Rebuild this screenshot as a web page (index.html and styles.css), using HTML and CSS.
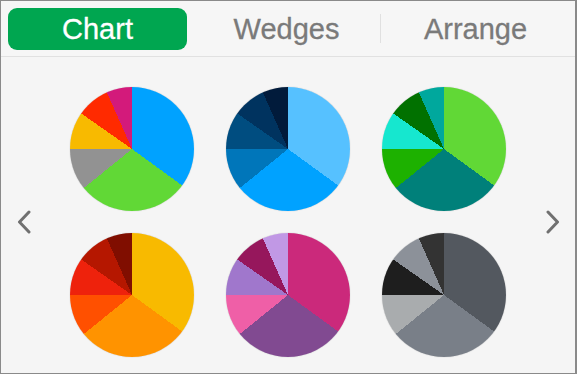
FILE: index.html
```html
<!DOCTYPE html>
<html lang="en">
<head>
    <meta charset="UTF-8">
    <meta name="viewport" content="width=device-width, initial-scale=1.0">
    <title>Chart Styles</title>
    <link rel="stylesheet" href="styles.css">
</head>
<body>
    <div class="panel">
        <div class="tabs">
            <div class="tab active">Chart</div>
            <div class="tab tab-second">Wedges</div>
            <div class="tab-sep"></div>
            <div class="tab">Arrange</div>
        </div>
        <div class="carousel">
            <svg class="chevron" width="14" height="24" viewBox="0 0 14 24">
                <polyline points="12,2 2.5,12 12,22" />
            </svg>
            <div class="pie-grid">
                <div class="pie pie-1"></div>
                <div class="pie pie-2"></div>
                <div class="pie pie-3"></div>
                <div class="pie pie-4"></div>
                <div class="pie pie-5"></div>
                <div class="pie pie-6"></div>
            </div>
            <svg class="chevron" width="14" height="24" viewBox="0 0 14 24">
                <polyline points="2,2 11.5,12 2,22" />
            </svg>
        </div>
    </div>
</body>
</html>
```

FILE: styles.css
```css
html, body {
    margin: 0;
    padding: 0;
}
body {
    font-family: "Liberation Sans", Arial, sans-serif;
    background-color: #f5f5f5;
}
.panel {
    width: 577px;
    height: 374px;
    box-sizing: border-box;
    border: 1px solid #8a8a8a;
    border-right-width: 2px;
    background-color: #f5f5f5;
}
.tabs {
    display: flex;
    align-items: center;
    height: 56px;
    box-sizing: border-box;
    padding: 7px 0 7px 7px;
    border-bottom: 1px solid #e1e1e1;
    background-color: #f6f6f6;
}
.tab {
    width: 179px;
    height: 42px;
    box-sizing: border-box;
    padding-top: 2px;
    display: flex;
    align-items: center;
    justify-content: center;
    font-size: 29px;
    color: #7a7a7a;
    -webkit-text-stroke: 0.3px currentColor;
    border-radius: 9px;
}
.tab.active {
    background-color: #00a650;
    color: #fff;
}
.tab-second {
    margin-left: 10px;
}
.tab-sep {
    width: 1px;
    height: 29px;
    margin: 0 5px 0 4px;
    background-color: #e0e0e0;
}
.carousel {
    display: flex;
    align-items: center;
    justify-content: space-between;
    height: 315px;
    box-sizing: border-box;
    padding: 29px 15px 15px 16px;
}
.chevron polyline {
    fill: none;
    stroke: #707070;
    stroke-width: 3;
    stroke-linecap: round;
    stroke-linejoin: round;
}
.pie-grid {
    display: grid;
    grid-template-columns: repeat(3, 124px);
    grid-template-rows: repeat(2, 124px);
    column-gap: 32px;
    row-gap: 22px;
    margin-right: 2px;
}
.pie {
    width: 124px;
    height: 124px;
    border-radius: 50%;
    box-shadow: 0 0 1px rgba(0, 0, 0, 0.35);
}
.pie-1 {
    background: conic-gradient(#00a2ff 0 126deg, #61d836 126deg 231deg, #929292 231deg 270deg,
        #f8ba00 270deg 305deg, #ff2a00 305deg 336deg, #d31a7b 336deg 360deg);
}
.pie-2 {
    background: conic-gradient(#56c1ff 0 126deg, #00a2ff 126deg 231deg, #0076ba 231deg 270deg,
        #004d80 270deg 305deg, #00335f 305deg 336deg, #011b3b 336deg 360deg);
}
.pie-3 {
    background: conic-gradient(#61d836 0 126deg, #00807a 126deg 231deg, #1db100 231deg 270deg,
        #16e7cf 270deg 305deg, #017100 305deg 336deg, #00a89d 336deg 360deg);
}
.pie-4 {
    background: conic-gradient(#f8ba00 0 126deg, #ff9300 126deg 231deg, #ff5000 231deg 270deg,
        #ee220c 270deg 305deg, #b51700 305deg 336deg, #800e00 336deg 360deg);
}
.pie-5 {
    background: conic-gradient(#cb297b 0 126deg, #814a91 126deg 231deg, #ef5fa7 231deg 270deg,
        #a077cc 270deg 305deg, #96175c 305deg 336deg, #c198e5 336deg 360deg);
}
.pie-6 {
    background: conic-gradient(#53585f 0 126deg, #797f88 126deg 231deg, #a9acae 231deg 270deg,
        #1e1e1e 270deg 305deg, #8c9199 305deg 336deg, #333333 336deg 360deg);
}
```
